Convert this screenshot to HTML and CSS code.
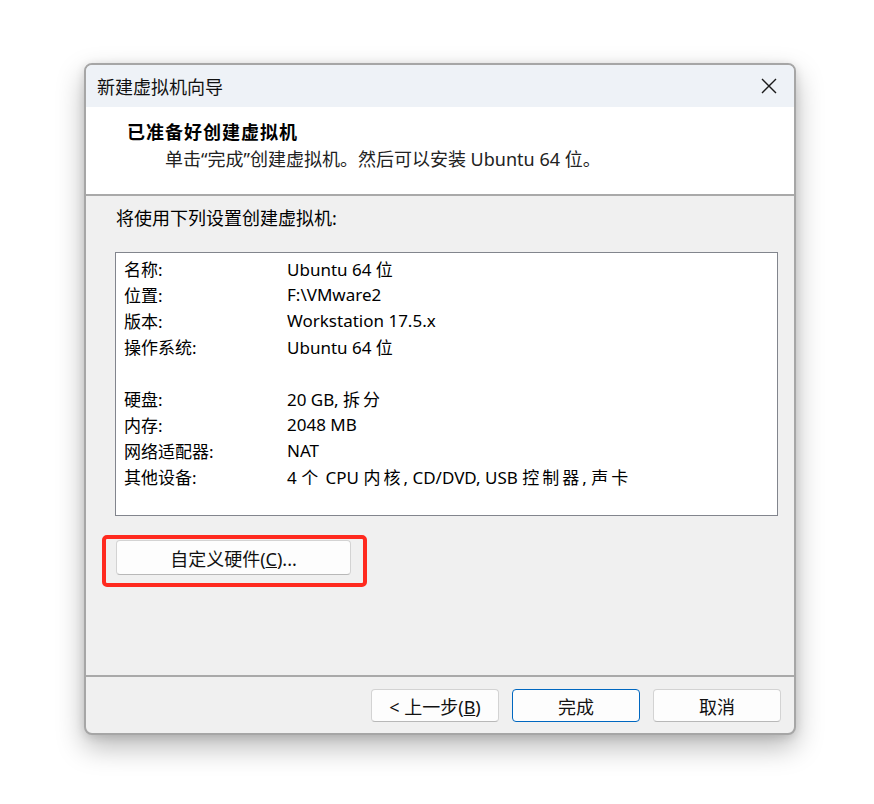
FILE: index.html
```html
<!DOCTYPE html>
<html lang="zh-CN">
<head>
<meta charset="utf-8">
<title>新建虚拟机向导</title>
<link rel="stylesheet" href="styles.css">
</head>
<body>
<div class="window">
  <div class="titlebar">
    <span class="title">新建虚拟机向导</span>
    <span class="close">
      <svg width="18" height="18" viewBox="0 0 18 18"><path d="M2 2 L16 16 M16 2 L2 16" stroke="#1a1a1a" stroke-width="1.4" fill="none"/></svg>
    </span>
  </div>
  <div class="header">
    <div class="heading">已准备好创建虚拟机</div>
    <div class="subtitle">单击“完成”创建虚拟机。然后可以安装 Ubuntu 64 位。</div>
  </div>
  <div class="content">
    <div class="intro">将使用下列设置创建虚拟机:</div>
    <div class="summary">
      <div class="row"><span class="key">名称:</span><span class="val">Ubuntu 64 <span class="cj">位</span></span></div>
      <div class="row"><span class="key">位置:</span><span class="val">F:\VMware2</span></div>
      <div class="row"><span class="key">版本:</span><span class="val">Workstation 17.5.x</span></div>
      <div class="row"><span class="key">操作系统:</span><span class="val">Ubuntu 64 <span class="cj">位</span></span></div>
      <div class="row blank"></div>
      <div class="row"><span class="key">硬盘:</span><span class="val">20 GB, <span class="cj">拆分</span></span></div>
      <div class="row"><span class="key">内存:</span><span class="val">2048 MB</span></div>
      <div class="row"><span class="key">网络适配器:</span><span class="val">NAT</span></div>
      <div class="row"><span class="key">其他设备:</span><span class="val">4 <span class="cj">个</span> CPU <span class="cj">内核</span>, CD/DVD, USB <span class="cj">控制器</span>, <span class="cj">声卡</span></span></div>
    </div>
    <div class="custom-wrap">
      <button class="btn custom">自定义硬件(<u>C</u>)...</button>
      <span class="highlight"></span>
    </div>
  </div>
  <div class="footer">
    <button class="btn">&lt; 上一步(<u>B</u>)</button>
    <button class="btn primary">完成</button>
    <button class="btn">取消</button>
  </div>
</div>
</body>
</html>
```
FILE: styles.css
```css
html, body {
  margin: 0;
  padding: 0;
  background: #ffffff;
}

body {
  width: 874px;
  height: 804px;
  overflow: hidden;
  font-family: "Noto Sans", "Noto Sans CJK SC", sans-serif;
  color: #000;
}

.window {
  box-sizing: border-box;
  margin: 63px 0 0 84px;
  width: 712px;
  height: 672px;
  border: 2px solid #a6a6a6;
  border-radius: 8px;
  background: #f0f0f0;
  box-shadow: 0 12px 28px rgba(0, 0, 0, 0.28), 0 2px 10px rgba(0, 0, 0, 0.12);
  display: flex;
  flex-direction: column;
  overflow: hidden;
}

.titlebar {
  height: 42px;
  background: #eef2f7;
  display: flex;
  align-items: center;
  justify-content: space-between;
  padding: 0 16px 0 11px;
  flex: none;
}

.title {
  font-family: "Noto Sans CJK SC", sans-serif;
  font-size: 18px;
  color: #111;
}

.close {
  display: flex;
  width: 18px;
  height: 18px;
}

.header {
  background: #ffffff;
  height: 89px;
  box-sizing: border-box;
  border-bottom: 2px solid #a9a9a9;
  padding: 11px 0 0 41px;
  flex: none;
}

.heading {
  font-family: "Noto Sans CJK SC", sans-serif;
  font-weight: 700;
  font-size: 18px;
  letter-spacing: 1px;
  line-height: 26px;
}

.subtitle {
  font-size: 18px;
  line-height: 26px;
  margin-top: 2px;
  padding-left: 38px;
  color: #222;
}

.content {
  flex: 1;
  padding: 10px 16px 0 29px;
  position: relative;
}

.intro {
  font-size: 18px;
  line-height: 24px;
  margin-left: 1px;
}

.summary {
  margin-top: 22px;
  height: 264px;
  box-sizing: border-box;
  border: 1px solid #82858d;
  background: #ffffff;
  padding: 2px 0 0 8px;
}

.row {
  display: flex;
  height: 26px;
  align-items: center;
  font-size: 17px;
  white-space: nowrap;
}

.key {
  width: 163px;
  flex: none;
}

.val {
  flex: 1;
  white-space: nowrap;
}

/* CJK runs inside values are set a little looser than the Latin text */
.cj {
  letter-spacing: 3px;
}

.custom-wrap {
  position: relative;
  margin-top: 24px;
  display: flex;
}

.btn {
  box-sizing: border-box;
  width: 128px;
  height: 33px;
  border: 1px solid #d3d3d3;
  border-bottom-color: #b8b8b8;
  border-radius: 4px;
  background: #fdfdfd;
  font-family: "Noto Sans", "Noto Sans CJK SC", sans-serif;
  font-size: 18px;
  color: #111;
  padding: 0;
}

.btn.custom {
  width: 235px;
  height: 35px;
  margin-left: 1px;
}

.btn.primary {
  border: 1px solid #0067c0;
}

.highlight {
  position: absolute;
  left: -13px;
  top: -5px;
  width: 265px;
  height: 52px;
  box-sizing: border-box;
  border: 4px solid #ff2a1f;
  border-radius: 5px;
}

.footer {
  height: 58px;
  box-sizing: border-box;
  border-top: 2px solid #a9a9a9;
  padding: 12px 13px 0 0;
  display: flex;
  justify-content: flex-end;
  gap: 13px;
  flex: none;
}
```
